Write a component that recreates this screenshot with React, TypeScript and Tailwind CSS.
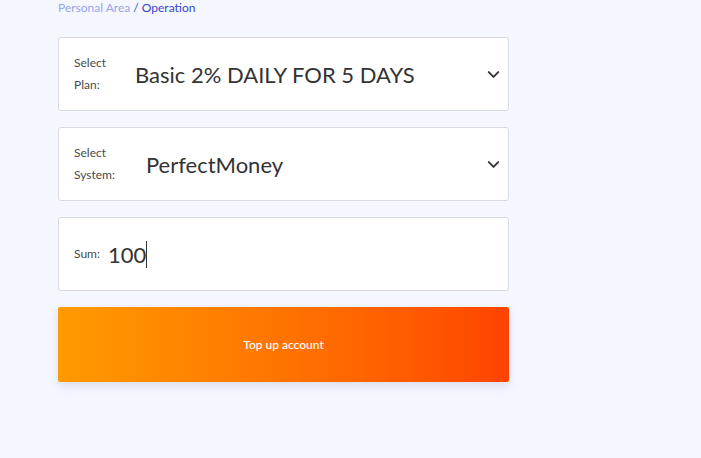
import { ChevronDown } from "lucide-react";

const Field = ({ label, value, valueClass, chevron }: { label: React.ReactNode; value: React.ReactNode; valueClass: string; chevron?: boolean }) => (
  <div className="flex h-[74px] items-center rounded-[3px] border border-[#d8dbe2] bg-white pl-[15px] pr-[5px]">
    <span className="text-[12px] leading-[22px] text-[#4a4a4a]">{label}</span>
    <span className={`flex-1 text-[#333] ${valueClass}`}>{value}</span>
    {chevron && <ChevronDown className="h-[19px] w-[19px] text-[#333]" strokeWidth={2.4} />}
  </div>
);

export default function App() {
  return (
    <div className="min-h-[458px] w-full bg-[#f4f7fe] pl-[58px]" style={{ fontFamily: "Lato, 'Open Sans', sans-serif" }}>
      <div className="w-[451px]">
        <div className="text-[12px] leading-[16px] pt-0">
          <span className="text-[#9aa3ec]">Personal Area</span>
          <span className="text-[#3b45c9]"> / Operation</span>
        </div>
        <div className="mt-[21px] flex flex-col gap-[16px]">
          <Field
            label={<>Select<br />Plan:</>}
            value="Basic 2% DAILY FOR 5 DAYS"
            valueClass="pl-[29px] text-[22px]"
            chevron
          />
          <Field
            label={<>Select<br />System:</>}
            value="PerfectMoney"
            valueClass="pl-[31px] text-[22px]"
            chevron
          />
          <Field
            label="Sum:"
            value={<span className="border-r border-[#333] pr-0">100</span>}
            valueClass="pl-[8px] text-[22px]"
          />
          <button className="h-[75px] w-full rounded-[2px] bg-gradient-to-r from-[#ff9a00] to-[#ff4200] text-[12px] font-medium text-white shadow-[0_4px_10px_rgba(100,110,150,0.18)]">
            Top up account
          </button>
        </div>
      </div>
    </div>
  );
}
